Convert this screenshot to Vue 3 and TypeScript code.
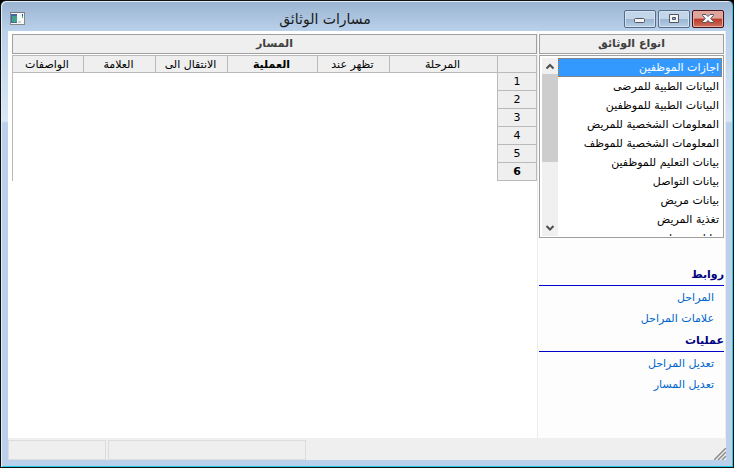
<script setup lang="ts">
import { ref } from 'vue'

interface Column { label: string; size: string; bold?: boolean }
interface LinkGroup { title: string; links: string[] }

const columns: Column[] = [
  { label: 'المرحلة', size: 'stage' },
  { label: 'تظهر عند', size: 'narrow' },
  { label: 'العملية', size: 'wide', bold: true },
  { label: 'الانتقال الى', size: 'narrow' },
  { label: 'العلامة', size: 'narrow' },
  { label: 'الواصفات', size: 'last' },
]
const rows = [1, 2, 3, 4, 5, 6]
const currentRow = ref(6)

const types = [
  'اجازات الموظفين',
  'البيانات الطبية للمرضى',
  'البيانات الطبية للموظفين',
  'المعلومات الشخصية للمريض',
  'المعلومات الشخصية للموظف',
  'بيانات التعليم للموظفين',
  'بيانات التواصل',
  'بيانات مريض',
  'تغذية المريض',
  'بيانات موظف',
  'تقارير الموظفين',
  'تقارير المرضى',
]
const selected = ref(types[0])

const groups: LinkGroup[] = [
  { title: 'روابط', links: ['المراحل', 'علامات المراحل'] },
  { title: 'عمليات', links: ['تعديل المراحل', 'تعديل المسار'] },
]
</script>

<template>
  <div class="window">
    <header class="titlebar">
      <svg class="app-icon" width="16" height="14" viewBox="0 0 16 14">
        <rect x="0" y="0" width="15" height="13" fill="#85898c" />
        <rect x="1" y="1" width="13" height="11" fill="#f7f8f8" />
        <rect x="0" y="0" width="15" height="1" fill="#777b80" />
        <rect x="1" y="2" width="6" height="9" fill="#4269a0" />
        <rect x="2" y="4" width="5" height="6" fill="#45a28a" />
        <rect x="12" y="2" width="1" height="2" fill="#2453ae" />
        <rect x="12" y="4" width="1" height="2" fill="#3fb873" />
        <rect x="8" y="9" width="3" height="2" fill="#cfd1d2" />
      </svg>
      <h1 dir="rtl">مسارات الوثائق</h1>
      <div class="controls">
        <button type="button" aria-label="تصغير">
          <svg width="12" height="12" viewBox="0 0 12 12">
            <rect x="0.5" y="5.5" width="10" height="4" rx="1" fill="#f4f4f4" stroke="#535666" />
          </svg>
        </button>
        <button type="button" aria-label="تكبير">
          <svg width="12" height="12" viewBox="0 0 12 12">
            <path d="M1.5 1.5h9v8h-9z" fill="#f4f4f4" stroke="#535666" />
            <path d="M4.500 4.500h3v2h-3z" fill="#8fb0d0" stroke="#535666" />
          </svg>
        </button>
        <button type="button" class="close" aria-label="اغلاق">
          <svg width="12" height="12" viewBox="0 0 12 12">
            <path d="M0.500 1.500h3.500l2 2 2-2h3.500v1L8.700 5.500l2.800 3v1H8l-2-2-2 2H0.500v-1l2.800-3L0.500 2.500z" fill="#f8f8f8" stroke="#535666" />
          </svg>
        </button>
      </div>
    </header>

    <div class="client" dir="rtl">
      <main class="body">
        <aside class="side">
          <h2 id="types-title" class="caption">انواع الوثائق</h2>
          <div class="listbox">
            <select v-model="selected" size="9" aria-labelledby="types-title">
              <option v-for="t in types" :key="t" :value="t">{{ t }}</option>
            </select>
            <div class="scroll" aria-hidden="true">
              <svg width="10" height="16" viewBox="0 0 10 16"><path d="M1.500 10.500 5 7l3.500 3.500" fill="none" stroke="#505050" stroke-width="2" /></svg>
              <div class="track"><div class="thumb"></div></div>
              <svg width="10" height="16" viewBox="0 0 10 16"><path d="M1.500 6 5 9.500 8.500 6" fill="none" stroke="#505050" stroke-width="2" /></svg>
            </div>
          </div>
          <nav class="links">
            <section v-for="g in groups" :key="g.title">
              <h3>{{ g.title }}</h3>
              <ul>
                <li v-for="l in g.links" :key="l"><a href="#">{{ l }}</a></li>
              </ul>
            </section>
          </nav>
        </aside>

        <section class="path">
          <h2 class="caption">المسار</h2>
          <table>
            <thead>
              <tr>
                <th class="num"></th>
                <th v-for="c in columns" :key="c.label" scope="col" :class="[c.size, { bold: c.bold }]">{{ c.label }}</th>
              </tr>
            </thead>
            <tbody>
              <tr v-for="r in rows" :key="r" :class="{ current: r === currentRow }" @click="currentRow = r">
                <th scope="row">{{ r }}</th>
                <td v-for="c in columns" :key="c.label"></td>
              </tr>
            </tbody>
          </table>
        </section>
      </main>

      <footer class="status" dir="ltr">
        <div class="pane short"></div>
        <div class="pane long"></div>
        <svg class="grip" width="12" height="12" viewBox="0 0 12 12">
          <path d="M0 12 12 0M4 12l8-8M8 12l4-4" stroke="#8c8c8c" stroke-width="1.500" fill="none" />
        </svg>
      </footer>
    </div>
  </div>
</template>

<style>
body {
  margin: 0;
  background: #000;
}
</style>

<style scoped>
* {
  box-sizing: border-box;
}
.window {
  display: flex;
  flex-direction: column;
  min-height: 100vh;
  padding: 0 7px 7px;
  border: 1px solid #101010;
  border-radius: 6px 6px 0 0;
  box-shadow: inset 1px 1px 0 #e4eef8, inset -1px -1px 0 #1fcbe8;
  background: linear-gradient(#9ab3d0 0, #b9d1ea 30px, #cfe0f2 90px, #d9e6f5 120px, #b9d1ea 122px);
  font-family: "DejaVu Sans", sans-serif;
  font-size: 11px;
  color: #000;
}
.titlebar {
  display: grid;
  grid-template-columns: 1fr auto 1fr;
  align-items: center;
  height: 30px;
  padding: 6px 2px 0;
}
.titlebar h1 {
  margin: 0;
  padding-right: 84px;
  color: #1a1a1a;
  font-size: 14px;
  font-weight: 400;
  line-height: 24px;
}
.controls {
  display: flex;
  justify-content: flex-end;
  gap: 2px;
}
.controls button {
  display: grid;
  place-items: center;
  width: 32px;
  height: 18px;
  padding: 0;
  border: 1px solid #566c89;
  border-radius: 2px;
  background: linear-gradient(#c3d5e9 0 48%, #9ab5d1 50%, #b6cde5);
  box-shadow: inset 0 0 0 1px #d4e2f0;
}
.controls .close {
  border-color: #4b1019;
  background: linear-gradient(#dfa59b 0 45%, #b83a27 50%, #ce705a);
  box-shadow: inset 0 0 0 1px #e3aaa2;
}
.client {
  flex: 1;
  display: flex;
  flex-direction: column;
  background: #efefef;
}
.body {
  flex: 1;
  display: flex;
  background: #fff;
}
.caption {
  margin: 0;
  border: 1px solid #a0a0a0;
  background: #efefef;
  color: #404040;
  font-size: 11px;
  font-weight: 700;
  line-height: 18px;
  text-align: center;
}
.side {
  width: 189px;
  padding: 3px 1px 0;
  border: solid #ececec;
  border-width: 0 1px;
  background: #fdfdfd;
}
.listbox {
  display: flex;
  height: 183px;
  margin-top: 1px;
  padding: 2px 1px 1px 2px;
  border: 1px solid #a0a0a0;
  background: #fff;
}
.listbox select {
  flex: 1;
  min-width: 0;
  height: 100%;
  padding: 0;
  border: 0;
  outline: 0;
  border-radius: 0;
  background: #fff;
  font: inherit;
  color: #000;
  scrollbar-width: none;
}
.listbox option {
  height: 19px;
  min-height: 19px;
  padding: 2px 2px 0;
  border: 1px solid transparent;
  line-height: 15px;
}
.listbox option:checked {
  border: 1px dotted #c67022;
  background: #3399ff linear-gradient(#3399ff, #3399ff);
  color: #fff;
  -webkit-text-fill-color: #fff;
}
.scroll {
  display: flex;
  flex-direction: column;
  align-items: center;
  width: 16px;
  background: #f0f0f0;
}
.track {
  flex: 1;
  width: 100%;
}
.thumb {
  width: 16px;
  height: 60%;
  background: #cdcdcd;
}
.links {
  padding-top: 26px;
}
.links h3 {
  margin: 0;
  border-bottom: 1px solid #0000c8;
  color: #000080;
  font-size: 11px;
  line-height: 21px;
}
.links ul {
  margin: 0;
  padding: 2px 10px 0 0;
  list-style: none;
}
.links li {
  height: 21px;
  line-height: 20px;
}
.links a {
  color: #0066cc;
  text-decoration: none;
}
.path {
  flex: 1;
  min-width: 0;
  padding: 3px 0 0 4px;
}
table {
  width: 100%;
  margin-top: 1px;
  border-collapse: collapse;
  table-layout: fixed;
}
th {
  height: 18px;
  padding: 1px 0 0;
  border: 1px solid #bababa;
  background: #efefef;
  font-weight: 400;
  line-height: 16px;
  text-align: center;
}
thead th {
  height: 17px;
  padding-right: 2px;
  line-height: 15px;
}
td {
  padding: 0;
}
td:last-child {
  border-left: 1px solid #bababa;
}
.num {
  width: 39px;
}
.narrow {
  width: 72px;
}
.last {
  width: 71px;
}
.wide {
  width: 90px;
}
.bold,
.current th {
  font-weight: 700;
}
.current td:nth-child(2) {
  border-right: 1px solid #99ccff;
}
.status {
  display: flex;
  gap: 2px;
  height: 22px;
  padding: 2px 0 0;
}
.pane {
  border: 1px solid #dcdcdc;
}
.short {
  width: 98px;
}
.long {
  width: 198px;
}
.grip {
  align-self: flex-end;
  margin-left: auto;
}
</style>
